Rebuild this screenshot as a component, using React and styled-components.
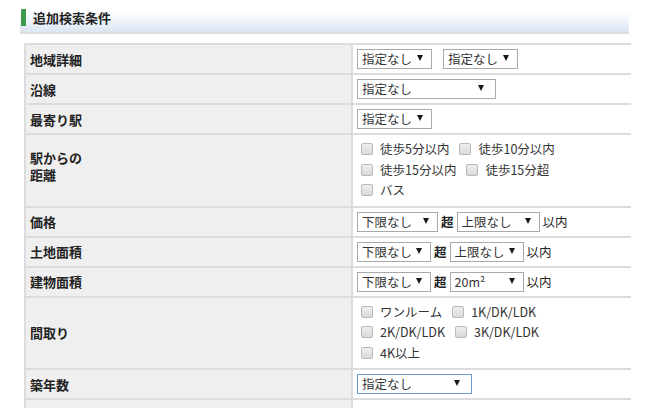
import React from 'react';
import styled, { createGlobalStyle } from 'styled-components';

const GlobalStyle = createGlobalStyle`
    body {
        margin: 0;
        background: #ffffff;
        font-family: "Noto Sans CJK JP", "Noto Sans", sans-serif;
        color: #333;
    }
`;

const Page = styled.div`
    width: 650px;
    height: 408px;
    overflow: hidden;
`;

const SectionHeader = styled.div`
    margin-left: 20px;
    width: 609px;
    height: 34px;
    display: flex;
    align-items: center;
    gap: 7px;
    padding-left: 1px;
    box-sizing: border-box;
    background: linear-gradient(to bottom, #ffffff 0%, #ffffff 35%, #dbe6f2 100%);
    border-bottom: 2px solid #dcdee2;
`;

const GreenMark = styled.span`
    width: 5px;
    height: 17px;
    background: #3e9a4c;
    margin-top: 2px;
`;

const Title = styled.h2`
    margin: 2px 0 0;
    font-size: 13px;
    font-weight: bold;
    color: #222;
    line-height: 17px;
`;

const Table = styled.div`
    margin: 9px 0 0 24px;
    width: 605px;
    display: grid;
    grid-template-columns: 325px 1fr;
    gap: 2px;
    padding: 2px 0 2px 2px;
    background: #dcdcdc;
`;

const LabelCell = styled.div`
    background: #efefef;
    min-height: 28px;
    padding: ${({ $tall }) => ($tall ? '0 0 8px' : '0')} 4px;
    display: flex;
    align-items: center;
    font-size: 13px;
    font-weight: bold;
    color: #222;
    line-height: 17px;
    white-space: pre-line;
`;

const ValueCell = styled.div`
    background: #ffffff;
    min-height: 28px;
    padding: ${({ $multi }) => ($multi ? '4px 4px 5px' : '0 4px')};
    display: flex;
    flex-direction: ${({ $multi }) => ($multi ? 'column' : 'row')};
    justify-content: ${({ $multi }) => ($multi ? 'center' : 'flex-start')};
    align-items: ${({ $multi }) => ($multi ? 'flex-start' : 'center')};
    gap: ${({ $gap }) => $gap ?? 3}px;
    font-size: 12.5px;
    color: #333;
`;

const SelectWrap = styled.span`
    position: relative;
    display: inline-block;
    width: ${({ $w }) => $w}px;
    height: 20px;

    &::after {
        content: '';
        position: absolute;
        right: ${({ $arrow }) => $arrow || 9}px;
        top: 6px;
        border-left: 3px solid transparent;
        border-right: 3px solid transparent;
        border-top: 6px solid #1a1a1a;
        pointer-events: none;
    }
`;

const Select = styled.select`
    appearance: none;
    -webkit-appearance: none;
    width: 100%;
    height: 20px;
    box-sizing: border-box;
    border: 1px solid ${({ $focus }) => ($focus ? '#6f9ad3' : '#a9a9a9')};
    border-radius: 0;
    background: #ffffff;
    padding: 0 14px 0 4px;
    font-family: "Noto Sans CJK JP", sans-serif;
    font-size: 12.5px;
    line-height: 18px;
    color: #333;
    outline: none;
`;

const Joiner = styled.span`
    font-size: 12.5px;
    line-height: 20px;
    color: #222;
    font-weight: ${({ $bold }) => ($bold ? 600 : 400)};
`;

const CheckLine = styled.div`
    display: flex;
    align-items: center;
    height: 20.5px;
`;

const CheckItem = styled.label`
    display: inline-flex;
    align-items: center;
    margin-left: 4px;
    margin-right: 6px;
    line-height: 20px;
    color: #333;
`;

const Box = styled.span`
    width: 10px;
    height: 10px;
    margin-right: 7px;
    border: 1px solid #b9b9b9;
    border-radius: 2px;
    background: linear-gradient(to bottom, #efefef, #d9d9d9);
`;

const Drop = ({ w, value, arrow, focus }) => (
    <SelectWrap $w={w} $arrow={arrow}>
        <Select $focus={focus} defaultValue={value}>
            <option>{value}</option>
        </Select>
    </SelectWrap>
);

const Checks = ({ lines }) =>
    lines.map((line, i) => (
        <CheckLine key={i}>
            {line.map((t) => (
                <CheckItem key={t}>
                    <Box />
                    {t}
                </CheckItem>
            ))}
        </CheckLine>
    ));

const Range = ({ from, to, w1, w2 }) => (
    <>
        <Drop w={w1} value={from} />
        <Joiner $bold>超</Joiner>
        <Drop w={w2} value={to} />
        <Joiner>以内</Joiner>
    </>
);

const App = () => (
    <Page>
        <GlobalStyle />
        <SectionHeader>
            <GreenMark />
            <Title>追加検索条件</Title>
        </SectionHeader>
        <Table>
            <LabelCell>地域詳細</LabelCell>
            <ValueCell $gap={11}>
                <Drop w={75} value="指定なし" />
                <Drop w={75} value="指定なし" />
            </ValueCell>

            <LabelCell>沿線</LabelCell>
            <ValueCell>
                <Drop w={139} value="指定なし" arrow={12} />
            </ValueCell>

            <LabelCell>最寄り駅</LabelCell>
            <ValueCell>
                <Drop w={75} value="指定なし" />
            </ValueCell>

            <LabelCell $tall>{'駅からの\n距離'}</LabelCell>
            <ValueCell $multi $gap={0}>
                <Checks lines={[['徒歩5分以内', '徒歩10分以内'], ['徒歩15分以内', '徒歩15分超'], ['バス']]} />
            </ValueCell>

            <LabelCell>価格</LabelCell>
            <ValueCell>
                <Range from="下限なし" to="上限なし" w1={81} w2={83} />
            </ValueCell>

            <LabelCell>土地面積</LabelCell>
            <ValueCell>
                <Range from="下限なし" to="上限なし" w1={74} w2={74} />
            </ValueCell>

            <LabelCell>建物面積</LabelCell>
            <ValueCell>
                <Range from="下限なし" to="20m²" w1={74} w2={74} />
            </ValueCell>

            <LabelCell>間取り</LabelCell>
            <ValueCell $multi $gap={0}>
                <Checks lines={[['ワンルーム', '1K/DK/LDK'], ['2K/DK/LDK', '3K/DK/LDK'], ['4K以上']]} />
            </ValueCell>

            <LabelCell>築年数</LabelCell>
            <ValueCell>
                <Drop w={115} value="指定なし" arrow={12} focus />
            </ValueCell>

            <LabelCell />
            <ValueCell />
        </Table>
    </Page>
);

export default App;
